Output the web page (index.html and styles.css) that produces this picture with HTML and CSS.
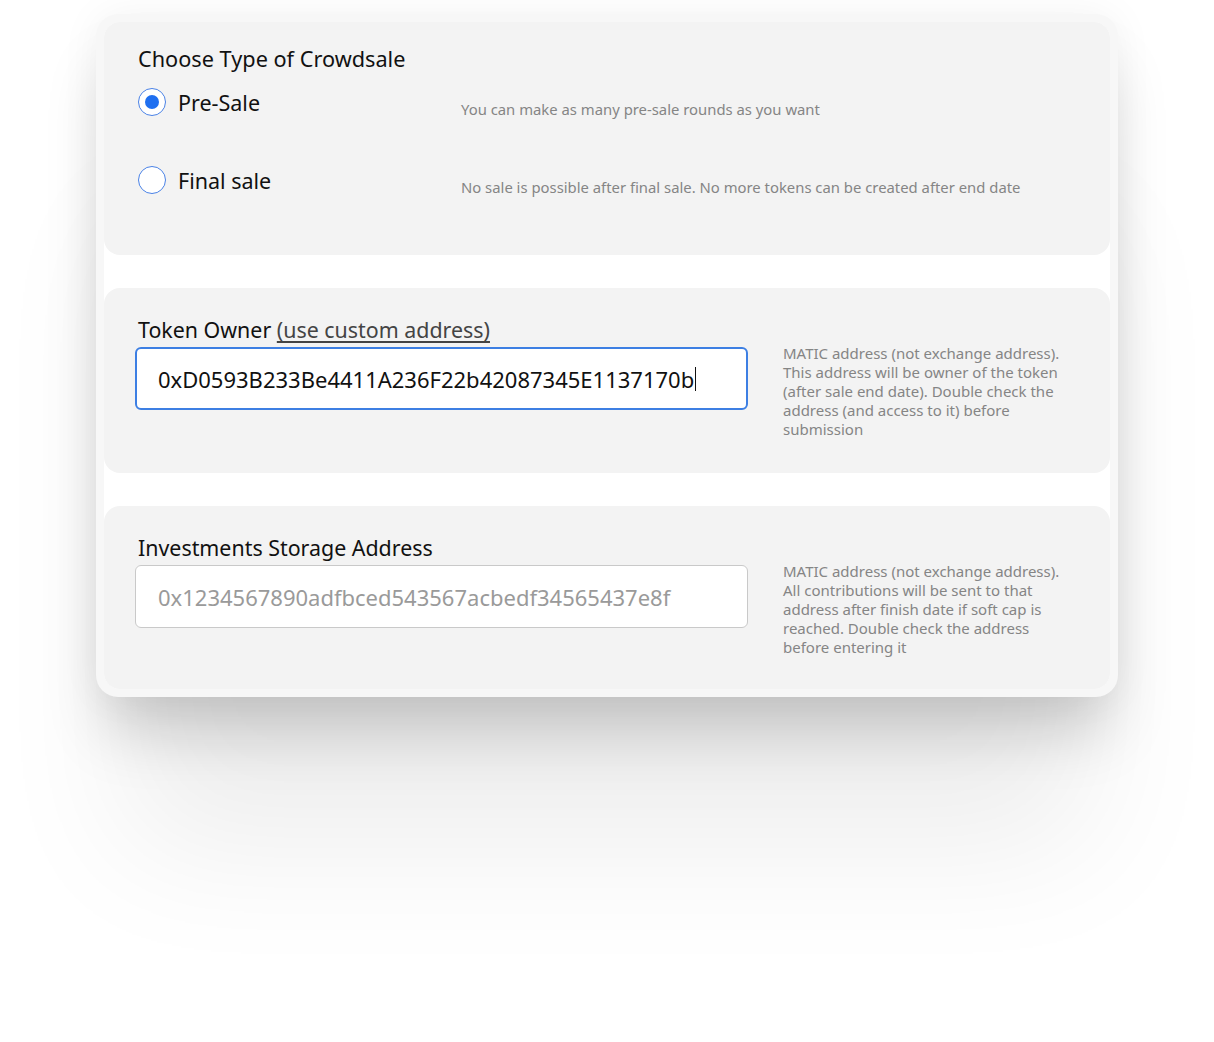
FILE: index.html
```html
<!DOCTYPE html>
<html>
<head>
<meta charset="utf-8">
<link rel="stylesheet" href="styles.css">
</head>
<body>
<div class="card">
  <div class="inner">
    <section class="panel panel-type">
      <h2 class="title">Choose Type of Crowdsale</h2>
      <div class="option">
        <span class="radio checked"></span>
        <span class="opt-label">Pre-Sale</span>
        <span class="opt-desc">You can make as many pre-sale rounds as you want</span>
      </div>
      <div class="option">
        <span class="radio"></span>
        <span class="opt-label">Final sale</span>
        <span class="opt-desc">No sale is possible after final sale. No more tokens can be created after end date</span>
      </div>
    </section>
    <section class="panel panel-field">
      <label class="field-label">Token Owner <a class="link">(use custom address)</a></label>
      <div class="input focused"><span>0xD0593B233Be4411A236F22b42087345E1137170b</span><span class="caret"></span></div>
      <p class="help">MATIC address (not exchange address). This address will be owner of the token (after sale end date). Double check the address (and access to it) before submission</p>
    </section>
    <section class="panel panel-field">
      <label class="field-label">Investments Storage Address</label>
      <div class="input placeholder"><span>0x1234567890adfbced543567acbedf34565437e8f</span></div>
      <p class="help">MATIC address (not exchange address). All contributions will be sent to that address after finish date if soft cap is reached. Double check the address before entering it</p>
    </section>
  </div>
</div>
</body>
</html>
```
FILE: styles.css
```css
html, body {
  margin: 0;
  padding: 0;
  background: #ffffff;
}
body {
  font-family: "Noto Sans", "Open Sans", sans-serif;
  color: #111;
  padding-top: 14px;
  min-height: 1042px;
  box-sizing: border-box;
  overflow: hidden;
}
.card {
  width: 1022px;
  margin: 0 auto;
  box-sizing: border-box;
  padding: 8px;
  background: #f7f7f7;
  border-radius: 22px;
  box-shadow: 0 45px 60px -10px rgba(0, 0, 0, 0.17), 0 180px 130px -30px rgba(0, 0, 0, 0.07), 0 0 40px rgba(0, 0, 0, 0.05);
}
.inner {
  background: #ffffff;
  border-radius: 16px;
  display: flex;
  flex-direction: column;
  gap: 33px;
}
.panel {
  background: #f3f3f3;
  border-radius: 16px;
}
.panel-type {
  padding: 24px 34px 55px 34px;
  height: 233px;
  box-sizing: border-box;
}
.title {
  margin: 0;
  font-size: 21.7px;
  font-weight: 400;
  line-height: 26px;
  color: #111;
}
.option {
  display: flex;
  align-items: center;
  height: 40px;
  margin-top: 10px;
}
.option + .option {
  margin-top: 38px;
}
.radio {
  width: 28px;
  height: 28px;
  border: 1.5px solid #4a82e6;
  border-radius: 50%;
  background: #fff;
  flex: none;
  position: relative;
  box-sizing: border-box;
}
.radio.checked::after {
  content: "";
  position: absolute;
  left: 50%;
  top: 50%;
  width: 14px;
  height: 14px;
  margin: -7px 0 0 -7px;
  background: #1f6ff0;
  border-radius: 50%;
}
.opt-label {
  font-size: 21.5px;
  margin-left: 12px;
  width: 283px;
  flex: none;
}
.opt-desc {
  font-size: 14.85px;
  color: #858585;
  margin-top: 13px;
}
.panel-field {
  display: grid;
  grid-template-columns: 613px 280px;
  column-gap: 35px;
  padding: 29px 34px 34px 31px;
  align-items: start;
}
.panel-field:last-child {
  padding-bottom: 32px;
}
.field-label {
  grid-column: 1 / 2;
  font-size: 21.4px;
  line-height: 26px;
  padding-left: 3px;
  color: #111;
  margin-bottom: 4px;
}
.link {
  color: #444;
  text-decoration: underline;
  text-underline-offset: 3px;
}
.input {
  grid-column: 1 / 2;
  height: 63px;
  box-sizing: border-box;
  border: 1px solid #c9c9c9;
  border-radius: 6px;
  background: #fff;
  display: flex;
  align-items: center;
  padding-left: 22px;
  font-size: 22px;
  color: #111;
}
.input.focused {
  border: 2px solid #3d7fe3;
  padding-left: 21px;
}
.input.placeholder {
  color: #9a9a9a;
}
.caret {
  width: 1px;
  height: 24px;
  background: #111;
  margin-left: 1px;
}
.help {
  grid-column: 2 / 3;
  grid-row: 2 / 3;
  margin: -3px 0 0 0;
  font-size: 15px;
  line-height: 19px;
  color: #858585;
}
```
